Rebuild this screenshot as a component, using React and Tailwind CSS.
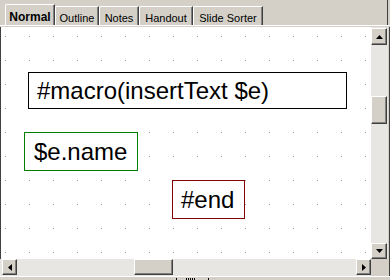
import React from 'react'

const tabs = [
  { label: 'Normal', w: 'w-[50px]', active: true },
  { label: 'Outline', w: 'w-[44px]' },
  { label: 'Notes', w: 'w-[40px]' },
  { label: 'Handout', w: 'w-[54px]' },
  { label: 'Slide Sorter', w: 'w-[70px]' }
]

// classic 3d raised button look
const raised =
  'bg-[#d4d0c8] border border-t-white border-l-white border-r-[#404040] border-b-[#404040] shadow-[inset_-1px_-1px_0_#808080]'

function Arrow({ dir }) {
  const pts = {
    up: '0,4 3.5,0 7,4',
    down: '0,0 7,0 3.5,4',
    left: '4,0 4,7 0,3.5',
    right: '0,0 0,7 4,3.5'
  }
  const vertical = dir === 'up' || dir === 'down'
  return (
    <svg width={vertical ? 7 : 4} height={vertical ? 4 : 7}>
      <polygon points={pts[dir]} fill="#000" />
    </svg>
  )
}

function ScrollButton({ dir, className }) {
  return (
    <div className={`${raised} ${className} flex items-center justify-center`}>
      <Arrow dir={dir} />
    </div>
  )
}

function Shape({ className, children }) {
  return (
    <div
      className={`absolute flex items-center bg-white px-2 text-[24px] leading-none text-black ${className}`}
    >
      {children}
    </div>
  )
}

export default function App() {
  return (
    <div className="flex h-[280px] w-[390px] flex-col overflow-hidden bg-[#d4d0c8] font-['Liberation_Sans',Arial,sans-serif]">
      {/* view tabs */}
      <div className="flex h-[25px] items-end pl-[5px] pr-[2px]">
        {tabs.map((t) =>
          t.active ? (
            <div
              key={t.label}
              className={`${t.w} flex h-[21px] items-start justify-center rounded-tl-[2px] border-l border-t border-r border-l-white border-t-white border-r-[#404040] pt-[3px] text-[12px] font-bold text-black shadow-[inset_-1px_0_0_#808080]`}
            >
              {t.label}
            </div>
          ) : (
            <div
              key={t.label}
              className={`${t.w} flex h-[19px] items-start justify-center rounded-tl-[2px] border-l border-t border-r border-l-white border-t-white border-r-[#404040] pt-[3px] text-[11px] text-black shadow-[inset_-1px_0_0_#808080]`}
            >
              {t.label}
            </div>
          )
        )}
        <div className="flex-1" />
        <div className="h-full w-[1px] bg-[#404040]" />
      </div>
      <div className="h-[1px] bg-white" />
      <div className="h-[1px] bg-[#d4d0c8]" />

      {/* slide area */}
      <div className="flex h-[232px]">
        <div className="w-[1px] bg-[#404040]" />
        <div className="relative w-[370px] bg-white">
          <svg className="absolute inset-0" width="370" height="232">
            <defs>
              <pattern id="grid" width="24" height="24" patternUnits="userSpaceOnUse">
                <rect x="4" y="9" width="1" height="1" fill="#9a9a9a" />
              </pattern>
            </defs>
            <rect width="370" height="232" fill="url(#grid)" />
          </svg>
          <Shape className="left-[27px] top-[45px] h-[37px] w-[319px] border border-black">
            #macro(insertText $e)
          </Shape>
          <Shape className="left-[23px] top-[105px] h-[39px] w-[114px] border border-[#008000] pl-[9px]">
            $e.name
          </Shape>
          <Shape className="left-[171px] top-[153px] h-[39px] w-[73px] border border-[#800000]">
            #end
          </Shape>
        </div>
        {/* vertical scrollbar */}
        <div className="flex w-[17px] flex-col bg-[#e8e6e2] pt-[1px]">
          <ScrollButton dir="up" className="h-[17px] w-[16px]" />
          <div className={`${raised} mt-[51px] h-[28px] w-[16px]`} />
          <div className="flex-1" />
          <ScrollButton dir="down" className="h-[16px] w-[16px]" />
        </div>
        <div className="w-[1px] bg-[#d4d0c8]" />
        <div className="w-[1px] bg-[#404040]" />
      </div>

      {/* horizontal scrollbar */}
      <div className="flex h-[17px]">
        <div className="flex w-[371px] items-start bg-[#e8e6e2] pl-[2px]">
          <ScrollButton dir="left" className="h-[16px] w-[15px]" />
          <div className={`${raised} ml-[117px] h-[16px] w-[39px]`} />
          <div className="flex-1" />
          <ScrollButton dir="right" className="h-[16px] w-[15px]" />
        </div>
        <div className="w-[17px] bg-[#d4d0c8]" />
        <div className="w-[1px] bg-[#d4d0c8]" />
        <div className="w-[1px] bg-[#404040]" />
      </div>

      {/* top edge of the notes pane */}
      <div className="h-[1px] bg-white" />
      <div className="relative h-[3px] bg-[#d4d0c8]">
        <svg className="absolute left-[175px] top-[1px]" width="36" height="2">
          <rect x="1" y="0" width="1" height="2" fill="#000" />
          <rect x="11" y="0" width="1" height="2" fill="#000" />
          <rect x="13" y="0" width="1" height="2" fill="#000" />
          <rect x="15" y="0" width="1" height="2" fill="#000" />
          <rect x="17" y="0" width="1" height="2" fill="#000" />
          <rect x="19" y="0" width="1" height="2" fill="#000" />
          <rect x="33" y="0" width="1" height="2" fill="#000" />
        </svg>
      </div>
    </div>
  )
}
